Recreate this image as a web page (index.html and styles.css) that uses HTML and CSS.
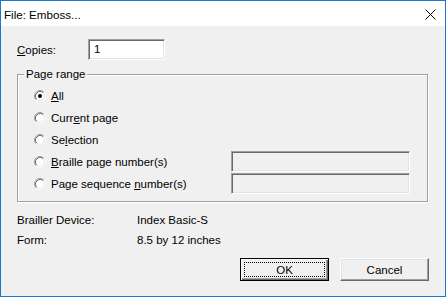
FILE: index.html
```html
<!DOCTYPE html>
<html>
<head>
<meta charset="utf-8">
<title>File: Emboss...</title>
<link rel="stylesheet" href="styles.css">
</head>
<body>
<div class="window">
  <div class="titlebar">
    <span class="title">File: Emboss...</span>
    <span class="close">
      <svg width="11" height="11" viewBox="0 0 11 11"><path d="M0.5 0.5 L10.5 10.5 M10.5 0.5 L0.5 10.5" stroke="#000" stroke-width="1" fill="none"/></svg>
    </span>
  </div>
  <div class="client">
    <div class="copies-row">
      <span class="copies-label"><u>C</u>opies:</span>
      <div class="field field-white">1</div>
    </div>
    <fieldset class="group">
      <legend class="legend">Page range</legend>
      <div class="row">
        <svg class="radio" width="12" height="12" viewBox="0 0 12 12"><circle cx="6" cy="6" r="5" fill="#fff"/><path d="M9.89 2.11 A5.5 5.5 0 0 0 2.11 9.89" stroke="#a0a0a0" fill="none"/><path d="M9.18 2.82 A4.5 4.5 0 0 0 2.82 9.18" stroke="#696969" fill="none"/><path d="M9.89 2.11 A5.5 5.5 0 0 1 2.11 9.89" stroke="#ffffff" fill="none"/><path d="M9.18 2.82 A4.5 4.5 0 0 1 2.82 9.18" stroke="#e3e3e3" fill="none"/><circle cx="6" cy="6" r="2" fill="#000"/></svg>
        <span class="rlabel"><u>A</u>ll</span>
      </div>
      <div class="row">
        <svg class="radio" width="12" height="12" viewBox="0 0 12 12"><circle cx="6" cy="6" r="5" fill="#fff"/><path d="M9.89 2.11 A5.5 5.5 0 0 0 2.11 9.89" stroke="#a0a0a0" fill="none"/><path d="M9.18 2.82 A4.5 4.5 0 0 0 2.82 9.18" stroke="#696969" fill="none"/><path d="M9.89 2.11 A5.5 5.5 0 0 1 2.11 9.89" stroke="#ffffff" fill="none"/><path d="M9.18 2.82 A4.5 4.5 0 0 1 2.82 9.18" stroke="#e3e3e3" fill="none"/></svg>
        <span class="rlabel">Curr<u>e</u>nt page</span>
      </div>
      <div class="row">
        <svg class="radio" width="12" height="12" viewBox="0 0 12 12"><circle cx="6" cy="6" r="5" fill="#fff"/><path d="M9.89 2.11 A5.5 5.5 0 0 0 2.11 9.89" stroke="#a0a0a0" fill="none"/><path d="M9.18 2.82 A4.5 4.5 0 0 0 2.82 9.18" stroke="#696969" fill="none"/><path d="M9.89 2.11 A5.5 5.5 0 0 1 2.11 9.89" stroke="#ffffff" fill="none"/><path d="M9.18 2.82 A4.5 4.5 0 0 1 2.82 9.18" stroke="#e3e3e3" fill="none"/></svg>
        <span class="rlabel">Se<u>l</u>ection</span>
      </div>
      <div class="row">
        <svg class="radio" width="12" height="12" viewBox="0 0 12 12"><circle cx="6" cy="6" r="5" fill="#fff"/><path d="M9.89 2.11 A5.5 5.5 0 0 0 2.11 9.89" stroke="#a0a0a0" fill="none"/><path d="M9.18 2.82 A4.5 4.5 0 0 0 2.82 9.18" stroke="#696969" fill="none"/><path d="M9.89 2.11 A5.5 5.5 0 0 1 2.11 9.89" stroke="#ffffff" fill="none"/><path d="M9.18 2.82 A4.5 4.5 0 0 1 2.82 9.18" stroke="#e3e3e3" fill="none"/></svg>
        <span class="rlabel"><u>B</u>raille page number(s)</span>
        <div class="field field-disabled"></div>
      </div>
      <div class="row">
        <svg class="radio" width="12" height="12" viewBox="0 0 12 12"><circle cx="6" cy="6" r="5" fill="#fff"/><path d="M9.89 2.11 A5.5 5.5 0 0 0 2.11 9.89" stroke="#a0a0a0" fill="none"/><path d="M9.18 2.82 A4.5 4.5 0 0 0 2.82 9.18" stroke="#696969" fill="none"/><path d="M9.89 2.11 A5.5 5.5 0 0 1 2.11 9.89" stroke="#ffffff" fill="none"/><path d="M9.18 2.82 A4.5 4.5 0 0 1 2.82 9.18" stroke="#e3e3e3" fill="none"/></svg>
        <span class="rlabel">Page sequence <u>n</u>umber(s)</span>
        <div class="field field-disabled"></div>
      </div>
    </fieldset>
    <div class="info">
      <div class="info-row"><span class="info-key">Brailler Device:</span><span>Index Basic-S</span></div>
      <div class="info-row"><span class="info-key">Form:</span><span>8.5 by 12 inches</span></div>
    </div>
    <div class="buttons">
      <div class="btn btn-default"><span class="focus">OK</span></div>
      <div class="btn">Cancel</div>
    </div>
  </div>
</div>
</body>
</html>
```

FILE: styles.css
```css
html, body {
  margin: 0;
  padding: 0;
  background: #f0f0f0;
}
.window {
  width: 446px;
  height: 297px;
  box-sizing: border-box;
  border: 1px solid #1c75cf;
  display: flex;
  flex-direction: column;
  font-family: "Liberation Sans", Arial, sans-serif;
  font-size: 11.5px;
  color: #000;
}
.titlebar {
  height: 25px;
  background: #fff;
  display: flex;
  align-items: center;
  justify-content: space-between;
  padding-left: 3px;
  padding-right: 9px;
}
.title {
  font-size: 11.6px;
  padding-top: 1px;
}
.close {
  display: flex;
  width: 11px;
  height: 11px;
  margin-top: 2px;
}
.client {
  flex: 1;
  background: #f0f0f0;
  padding: 13px 16px 0 16px;
}
.copies-row {
  display: flex;
  align-items: center;
  height: 21px;
}
.copies-label {
  width: 71px;
}
.field {
  box-sizing: border-box;
  height: 21px;
  border: 1px solid;
  border-color: #a0a0a0 #ffffff #ffffff #a0a0a0;
  box-shadow: inset 1px 1px 0 #696969, inset -1px -1px 0 #e3e3e3;
}
.field-white {
  width: 77px;
  background: #fff;
  padding: 3px 0 0 5px;
  line-height: 13px;
}
.field-disabled {
  width: 179px;
  background: #f0f0f0;
  margin-left: auto;
  align-self: flex-start;
}
.group {
  margin: 8px 0 0 0;
  width: 411px;
  box-sizing: border-box;
  border: 1px solid #a0a0a0;
  box-shadow: inset 1px 1px 0 #fff, 1px 1px 0 #fff;
  padding: 4px 17px 6px 16px;
  min-width: 0;
}
.legend {
  margin-left: -10px;
  padding: 0 2px;
  line-height: 13px;
  background: #f0f0f0;
}
.row {
  display: flex;
  align-items: center;
  height: 22px;
}
.radio {
  flex: none;
  margin-right: 5px;
}
.info {
  margin-top: 8px;
}
.info-row {
  display: flex;
  align-items: center;
  height: 20px;
}
.info-key {
  width: 120px;
}
.buttons {
  margin-top: 8px;
  display: flex;
  justify-content: flex-end;
  gap: 11px;
}
.btn {
  box-sizing: border-box;
  width: 89px;
  height: 23px;
  background: #f0f0f0;
  border: 1px solid;
  border-color: #ffffff #696969 #696969 #ffffff;
  box-shadow: inset -1px -1px 0 #a0a0a0, inset 1px 1px 0 #e3e3e3;
  display: flex;
  align-items: center;
  justify-content: center;
}
.btn-default {
  border: 1px solid #000;
  box-shadow: inset 1px 1px 0 #fff, inset -1px -1px 0 #696969, inset -2px -2px 0 #a0a0a0;
  padding: 3px;
}
.focus {
  flex: 1;
  align-self: stretch;
  border: 1px dotted #000;
  display: flex;
  align-items: center;
  justify-content: center;
}
```
